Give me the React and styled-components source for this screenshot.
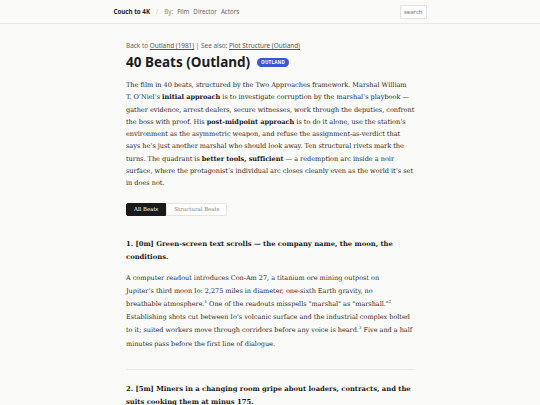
import React from 'react'
import styled, { createGlobalStyle } from 'styled-components'

const GlobalStyle = createGlobalStyle`
  body {
    margin: 0;
    background: #fafaf8;
    color: #222;
  }
`

const Header = styled.header`
  height: 23px;
  border-bottom: 1px solid #e8e8e5;
  display: flex;
  justify-content: center;
`

const HeaderInner = styled.div`
  width: 313px;
  display: flex;
  align-items: center;
  font-family: 'Noto Sans', sans-serif;
  font-size: 6.2px;
`

const Brand = styled.span`
  font-weight: 700;
  color: #222;
`

const Slash = styled.span`
  color: #ccc;
  margin: 0 6px;
`

const NavLabel = styled.span`
  color: #888;
  margin-right: 4px;
`

const NavLink = styled.a`
  color: #666;
  text-decoration: none;
  margin-right: 4px;
`

const Search = styled.div`
  margin-left: auto;
  border: 1px solid #e2e2df;
  background: #fff;
  color: #777;
  font-size: 6px;
  padding: 2px 3px;
  border-radius: 1px;
`

const Main = styled.main`
  width: 289px;
  margin: 0 auto;
  padding: 17px 0 0 1px;
`

const Crumbs = styled.div`
  font-family: 'Noto Sans', sans-serif;
  font-size: 6.4px;
  color: #666;
  a {
    color: #555;
    text-decoration: underline;
  }
`

const TitleRow = styled.div`
  display: flex;
  align-items: center;
  gap: 7px;
  margin-top: 3px;
`

const Title = styled.h1`
  font-family: 'Noto Sans', sans-serif;
  font-size: 13.5px;
  font-weight: 700;
  margin: 0;
  color: #1c1c1c;
`

const Badge = styled.span`
  background: #3558d8;
  color: #fff;
  font-family: 'Noto Sans', sans-serif;
  font-weight: 700;
  font-size: 4.6px;
  letter-spacing: 0.2px;
  padding: 1.5px 4px;
  border-radius: 6px;
`

const Para = styled.p`
  font-family: 'DejaVu Serif', serif;
  font-size: ${p => p.size || 6.55}px;
  line-height: ${p => p.lh || 12.3}px;
  letter-spacing: -0.02px;
  color: #2a2a2a;
  margin: ${p => p.mt || 0}px 0 0;
  b {
    font-weight: 700;
    color: #1a1a1a;
  }
  sup {
    font-size: 4px;
    vertical-align: 3px;
    line-height: 0;
  }
`

const Tabs = styled.div`
  display: flex;
  margin: 13px 0 9px;
`

const Tab = styled.button`
  font-family: 'DejaVu Serif', serif;
  font-size: 5.4px;
  height: 13px;
  padding: 0 7px;
  border: 1px solid ${p => (p.active ? '#1a1a1a' : '#e4e4e1')};
  background: ${p => (p.active ? '#1a1a1a' : '#fff')};
  color: ${p => (p.active ? '#fff' : '#777')};
  border-radius: ${p => (p.active ? '2px 0 0 2px' : '0 2px 2px 0')};
  cursor: pointer;
`

const Beat = styled.section`
  padding: 13px 0 18px;
  border-bottom: 1px solid #e8e8e5;
`

const BeatTitle = styled.h2`
  font-family: 'DejaVu Serif', serif;
  font-weight: 700;
  font-size: 6.8px;
  line-height: 13px;
  margin: 0;
  color: #1a1a1a;
`

const nb = '\u00a0'

const beats = [
  {
    title: '1. [0m] Green-screen text scrolls — the company name, the moon, the conditions.',
    body: (
      <>
        A computer readout introduces Con-Am 27, a titanium ore mining outpost on Jupiter’s{nb}third
        moon Io: 2,275 miles in diameter, one-sixth Earth gravity, no breathable{nb}atmosphere.
        <sup>1</sup> One of the readouts misspells "marshal" as "marshall."<sup>2</sup> Establishing
        shots cut between Io’s volcanic surface and the industrial complex bolted to it; suited
        workers move through corridors before any voice is heard.<sup>3</sup> Five and a half
        minutes pass before the first line of dialogue.
      </>
    ),
  },
  {
    title: '2. [5m] Miners in a changing room gripe about loaders, contracts, and the suits cooking them at minus 175.',
    body: (
      <>
        The shift change is all complaint and bravado; one worker tests the pressure seal on his
        helmet twice before stepping into the lock.
      </>
    ),
  },
]

export default function App() {
  return (
    <>
      <GlobalStyle />
      <Header>
        <HeaderInner>
          <Brand>Couch to 4K</Brand>
          <Slash>/</Slash>
          <NavLabel>By:</NavLabel>
          <NavLink href="#">Film</NavLink>
          <NavLink href="#">Director</NavLink>
          <NavLink href="#">Actors</NavLink>
          <Search>search</Search>
        </HeaderInner>
      </Header>
      <Main>
        <Crumbs>
          Back to <a href="#">Outland (1981)</a> | See also: <a href="#">Plot Structure (Outland)</a>
        </Crumbs>
        <TitleRow>
          <Title>40 Beats (Outland)</Title>
          <Badge>OUTLAND</Badge>
        </TitleRow>
        <Para mt={8}>
          The film in 40 beats, structured by the Two Approaches framework. Marshal William
          T.{nb}O’Niel’s <b>initial approach</b> is to investigate corruption by the marshal’s
          playbook — gather evidence, arrest dealers, secure witnesses, work through the deputies,
          confront the boss with proof. His <b>post-midpoint approach</b> is to do it alone, use the
          station’s environment as the asymmetric weapon, and refuse the assignment-as-verdict that
          says he’s just another marshal who should look away. Ten structural rivets mark the turns.
          The quadrant is <b>better tools, sufficient</b> — a redemption arc inside a noir surface,
          where the protagonist’s individual arc closes cleanly even as the world it’s set in does
          not.
        </Para>
        <Tabs>
          <Tab active>All Beats</Tab>
          <Tab>Structural Beats</Tab>
        </Tabs>
        {beats.map((beat, i) => (
          <Beat key={`beat-${i}`}>
            <BeatTitle>{beat.title}</BeatTitle>
            <Para mt={8} lh={13.2} size={6.5}>
              {beat.body}
            </Para>
          </Beat>
        ))}
      </Main>
    </>
  )
}
